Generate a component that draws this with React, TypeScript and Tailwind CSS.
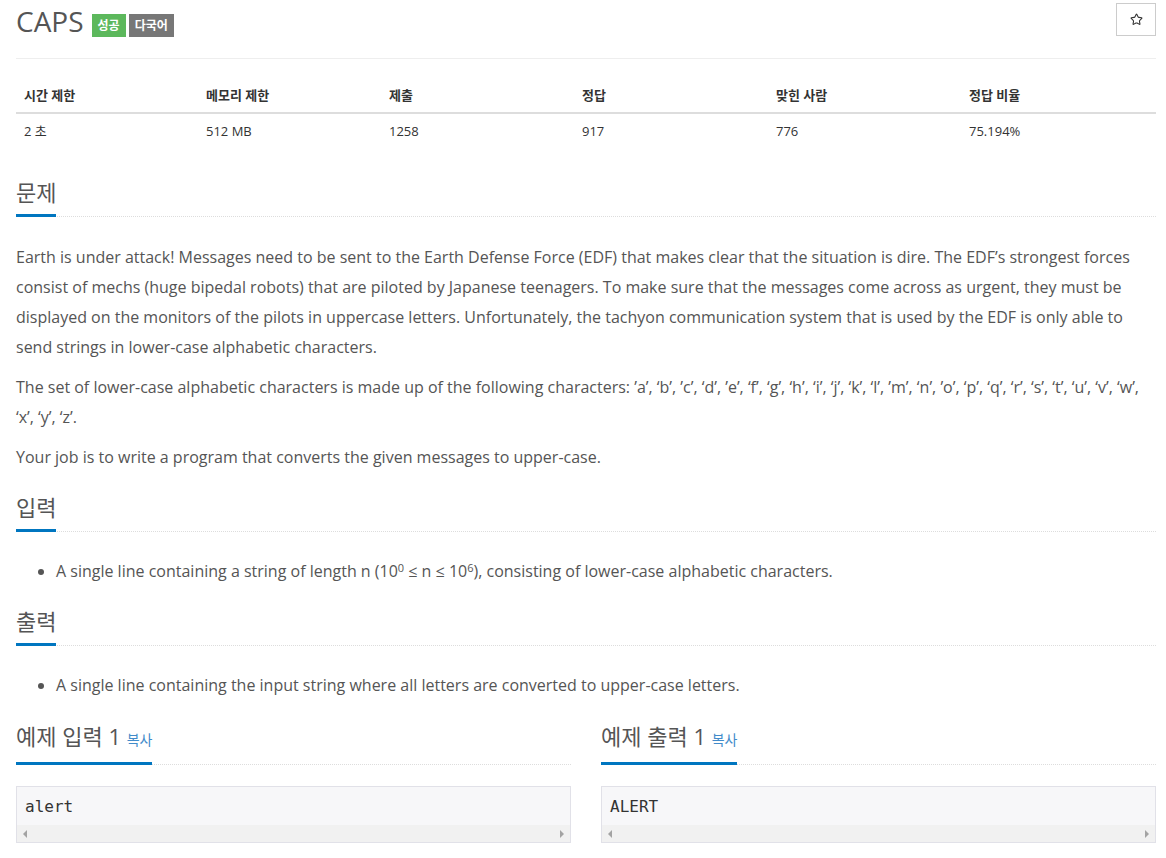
import { Star } from "lucide-react"

const stats = [
  ["시간 제한", "2 초"],
  ["메모리 제한", "512 MB"],
  ["제출", "1258"],
  ["정답", "917"],
  ["맞힌 사람", "776"],
  ["정답 비율", "75.194%"],
]

function Headline({ children }: { children: React.ReactNode }) {
  return (
    <div className="flex items-end border-b border-dotted border-[#ddd]">
      <h2 className="-mb-px border-b-[3px] border-[#0076c0] pb-[7px] text-[22px] leading-[30px] text-[#555]">
        {children}
      </h2>
    </div>
  )
}

function SampleBox({ title, text }: { title: string; text: string }) {
  return (
    <div className="flex flex-col">
      <Headline>
        {title} <span className="text-[14px] text-[#428bca]">복사</span>
      </Headline>
      <div className="mt-[21px] border border-[#e1e1e8] bg-[#f7f7f9]">
        <pre className="px-[8px] pt-[9px] pb-[7px] font-['DejaVu_Sans_Mono',monospace] text-[16px] leading-[22px] text-[#333]">
          {text}
        </pre>
        <div className="flex h-[17px] items-center justify-between bg-[#f1f1f1] px-[6px]">
          <span className="h-0 w-0 border-y-[4px] border-r-[4px] border-y-transparent border-r-[#a3a3a3]" />
          <span className="h-0 w-0 border-y-[4px] border-l-[4px] border-y-transparent border-l-[#a3a3a3]" />
        </div>
      </div>
    </div>
  )
}

export default function App() {
  return (
    <div className="min-h-screen bg-white pl-4 pr-[10px] font-['Open_Sans','Noto_Sans_CJK_KR',sans-serif] text-[#555]">
      <div className="flex items-start justify-between border-b border-[#eee] pb-[20px] pt-[3px]">
        <div className="flex items-center pt-[1px]">
          <h1 className="mr-[8px] text-[28px] leading-[34px] text-[#555]">CAPS</h1>
          <span className="mr-[3px] mt-[8px] bg-[#5cb85c] px-[6px] py-[3px] text-[12px] font-bold leading-[17px] text-white">성공</span>
          <span className="mt-[8px] bg-[#777] px-[6px] py-[3px] text-[12px] font-bold leading-[17px] text-white">다국어</span>
        </div>
        <button className="flex h-[33px] w-[40px] items-center justify-center border border-[#ccc] bg-white">
          <Star className="h-[13px] w-[13px] text-[#333]" strokeWidth={2} />
        </button>
      </div>

      <div className="mt-[19px] grid grid-cols-[182px_183px_193px_194px_193px_1fr] text-[13px]">
        {stats.map(([h]) => (
          <div key={h} className="border-b-2 border-[#ddd] px-2 py-[8px] font-bold leading-[18px] text-[#333]">
            {h}
          </div>
        ))}
        {stats.map(([h, v]) => (
          <div key={h} className="px-2 py-[8px] leading-[18px] text-[#333]">
            {v}
          </div>
        ))}
      </div>

      <div className="mt-[29px]">
        <Headline>문제</Headline>
        <div className="mt-[25px] text-[16px] leading-[30px]">
          <p>
            Earth is under attack! Messages need to be sent to the Earth Defense Force (EDF) that makes clear that the situation is dire. The EDF’s strongest forces consist of mechs (huge bipedal robots) that are piloted by Japanese teenagers. To make sure that the messages come across as urgent, they must be displayed on the monitors of the pilots in uppercase letters. Unfortunately, the tachyon communication system that is used by the EDF is only able to send strings in lower-case alphabetic characters.
          </p>
          <p className="mt-[10px]">
            The set of lower-case alphabetic characters is made up of the following characters: ’a’, ‘b’, ’c’, ‘d’, ’e’, ‘f’, ‘g’, ‘h’, ‘i’, ‘j’, ‘k’, ‘l’, ’m’, ‘n’, ’o’, ‘p’, ‘q’, ‘r’, ‘s’, ‘t’, ‘u’, ‘v’, ‘w’, ‘x’, ‘y’, ‘z’.
          </p>
          <p className="mt-[10px]">Your job is to write a program that converts the given messages to upper-case.</p>
        </div>
      </div>

      <div className="mt-[20px]">
        <Headline>입력</Headline>
        <ul className="mt-[24px] list-disc pl-10 text-[16px] leading-[30px]">
          <li>
            A single line containing a string of length n (10<sup className="text-[11px] leading-none">0</sup> ≤ n ≤ 10
            <sup className="text-[11px] leading-none">6</sup>), consisting of lower-case alphabetic characters.
          </li>
        </ul>
      </div>

      <div className="mt-[20px]">
        <Headline>출력</Headline>
        <ul className="mt-[24px] list-disc pl-10 text-[16px] leading-[30px]">
          <li>A single line containing the input string where all letters are converted to upper-case letters.</li>
        </ul>
      </div>

      <div className="mt-[21px] grid grid-cols-2 gap-[30px]">
        <SampleBox title="예제 입력 1" text="alert" />
        <SampleBox title="예제 출력 1" text="ALERT" />
      </div>
    </div>
  )
}
